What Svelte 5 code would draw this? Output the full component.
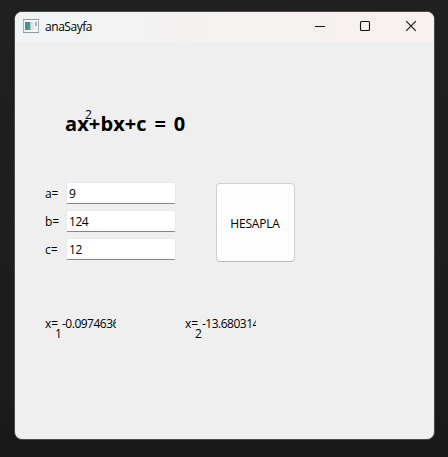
<script>
  let coefficients = $state([
    { name: 'a', value: '9' },
    { name: 'b', value: '124' },
    { name: 'c', value: '12' }
  ]);
  const roots = [
    { index: 1, value: '-0.0974636' },
    { index: 2, value: '-13.680314' }
  ];
</script>

<main class="desktop">
  <section class="window">
    <header class="titlebar">
      <svg class="app-icon" width="16" height="14" viewBox="0 0 16 14">
        <defs>
          <linearGradient id="pane" x1="0" y1="0" x2="1" y2="1">
            <stop offset="0" stop-color="#4b7db5" />
            <stop offset="1" stop-color="#46a870" />
          </linearGradient>
        </defs>
        <rect x=".5" y=".5" width="15" height="13" fill="#f5f6f6" stroke="#a9adb1" />
        <path d="M0 .5h16M0 13.5h16" stroke="#9499a0" />
        <rect x="2" y="3" width="5" height="8" fill="url(#pane)" />
        <rect x="7" y="3" width="1" height="8" fill="#a9c4cd" />
        <rect x="8" y="3" width="3" height="8" fill="#e2e4e6" />
        <rect x="12" y="3" width="2" height="4" fill="#8fb9ba" />
        <rect x="12" y="8" width="2" height="3" fill="#e9ebec" />
      </svg>
      <h1>anaSayfa</h1>
      <div class="controls">
        <svg width="12" height="12" viewBox="0 0 12 12"><path d="M1 6.5h10" /></svg>
        <svg width="12" height="12" viewBox="0 0 12 12"><rect x="1.5" y="1.5" width="9" height="9" rx="1" /></svg>
        <svg width="12" height="12" viewBox="0 0 12 12"><path d="M1.2 1.2l9.6 9.6M10.8 1.2l-9.6 9.6" /></svg>
      </div>
    </header>

    <div class="equation">ax+bx+c = 0<span class="power">2</span></div>

    <div class="form">
      <div class="fields">
        {#each coefficients as item}
          <label>
            <span>{item.name}=</span>
            <input bind:value={item.value} />
          </label>
        {/each}
      </div>
      <button>HESAPLA</button>
    </div>

    <div class="results">
      {#each roots as root}
        <div class="result">
          <span class="variable">x=<span class="index">{root.index}</span></span>
          <span class="number">{root.value}</span>
        </div>
      {/each}
    </div>
  </section>
</main>

<style>
  :global(body) { margin: 0; }
  .desktop {
    box-sizing: border-box;
    width: 448px;
    height: 457px;
    padding: 11px 13px 17px 14px;
    background: linear-gradient(#202020, #1c1c1c 85%, #181818);
    font: 12px/16px "Open Sans", "Noto Sans", sans-serif;
    color: #000;
  }
  .window {
    box-sizing: border-box;
    height: 429px;
    border: 1px solid #484848;
    border-radius: 8px;
    background: #efefef;
    overflow: hidden;
  }
  .titlebar {
    display: flex;
    align-items: center;
    box-sizing: border-box;
    height: 30px;
    padding: 0 17px 2px 8px;
    background: linear-gradient(90deg, #f0f4f5, #f4f2f1 40%, #f8f1ef);
  }
  h1 {
    margin: 2px 0 0 6px;
    font: inherit;
    letter-spacing: -.45px;
  }
  .controls {
    display: flex;
    gap: 34px;
    margin-left: auto;
  }
  .controls svg {
    display: block;
    fill: none;
    stroke: #111;
    stroke-width: 1.1;
  }
  .controls svg:first-child { margin-right: -1px; }
  .equation {
    position: relative;
    width: 140px;
    height: 26px;
    margin: 69px 0 0 50px;
    font-size: 20px;
    line-height: 26px;
    font-weight: 700;
    letter-spacing: .1px;
    word-spacing: 2.5px;
    white-space: nowrap;
  }
  .power {
    position: absolute;
    left: 20px;
    top: -4px;
    font-size: 12px;
    line-height: 16px;
    font-weight: 400;
    letter-spacing: 0;
  }
  .form {
    display: flex;
    gap: 40px;
    margin: 45px 0 0 30px;
  }
  .fields {
    display: flex;
    flex-direction: column;
    gap: 6px;
  }
  label {
    display: flex;
    align-items: center;
    height: 22px;
  }
  label span {
    width: 21px;
    padding-top: 2px;
    letter-spacing: -.1px;
  }
  input {
    box-sizing: border-box;
    width: 110px;
    height: 22px;
    padding: 0 2px;
    border: 1px solid #e8e8e8;
    border-bottom-color: #868686;
    border-radius: 2px;
    outline: none;
    background: #fff;
    font: inherit;
    letter-spacing: -.45px;
    color: #000;
  }
  button {
    box-sizing: border-box;
    width: 79px;
    height: 79px;
    margin-top: 1px;
    padding: 2px 1px 0 0;
    border: 1px solid #d0d0d0;
    border-bottom-color: #bbb;
    border-radius: 4px;
    background: #fdfdfd;
    font: inherit;
    letter-spacing: -.2px;
    color: #000;
  }
  .results {
    display: flex;
    gap: 69px;
    margin: 54px 0 0 30px;
  }
  .result {
    display: flex;
    width: 71px;
  }
  .variable {
    position: relative;
    width: 17px;
  }
  .index {
    position: absolute;
    left: 10px;
    top: 10px;
  }
  .number {
    width: 54px;
    overflow: hidden;
    white-space: nowrap;
    letter-spacing: -.5px;
  }
</style>
